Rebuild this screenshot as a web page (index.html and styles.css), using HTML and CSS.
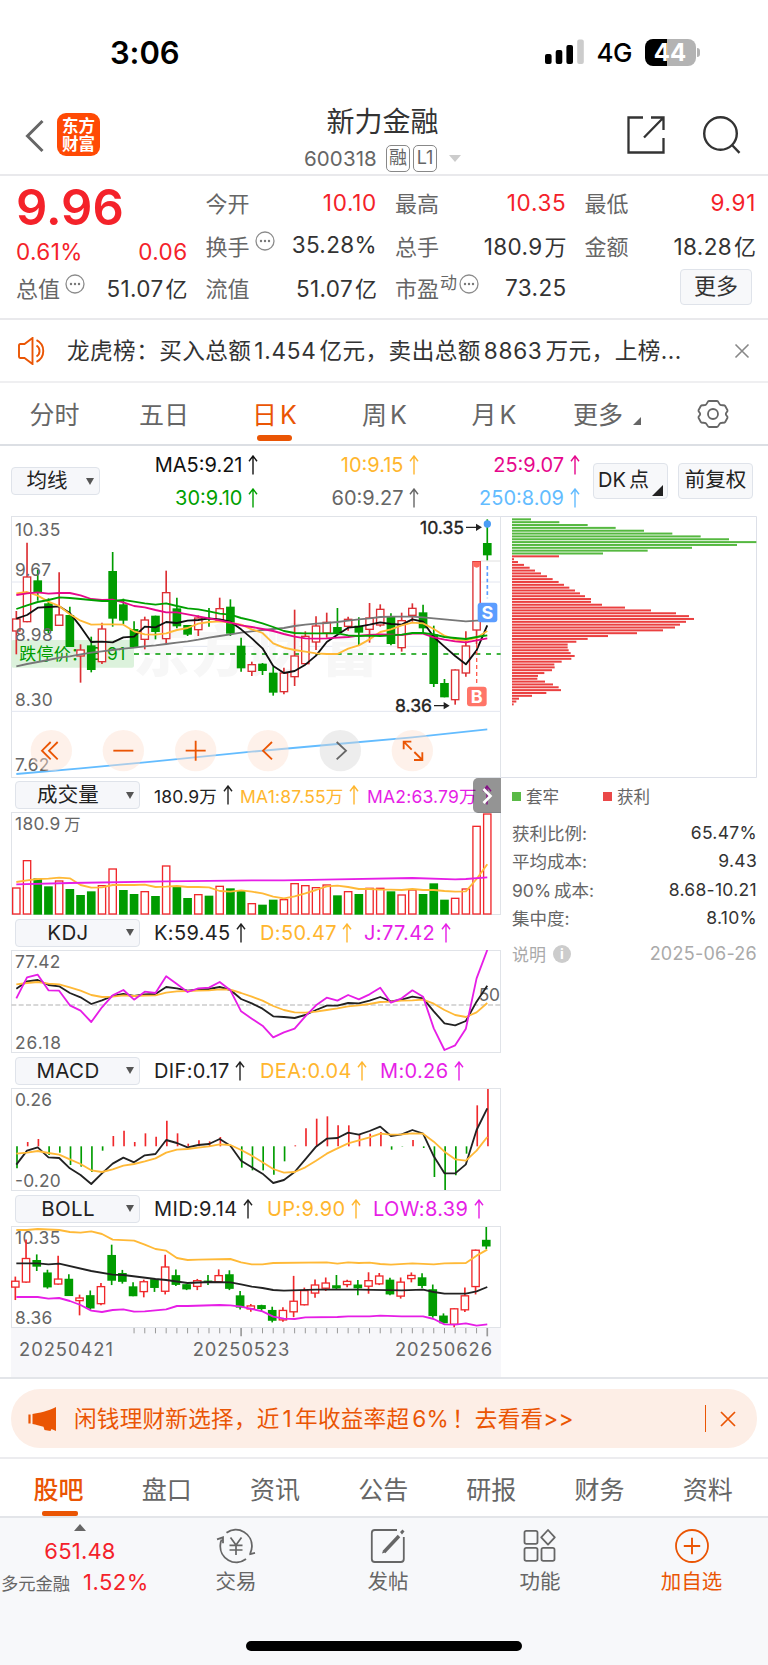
FILE: index.html
```html
<!DOCTYPE html>
<html lang="zh-CN">
<head>
<meta charset="utf-8">
<title>新力金融 600318</title>
<link rel="stylesheet" href="styles.css">
</head>
<body>
<svg class="defs" width="0" height="0">
  <symbol id="up" viewBox="0 0 10 20"><path d="M5 19.5V1M1 6.2L5 1l4 5.2" fill="none" stroke="currentColor" stroke-width="1.4"/></symbol>
  <symbol id="dots" viewBox="0 0 20 20"><circle cx="10" cy="10" r="9" fill="none" stroke="#8c8c8c" stroke-width="1.3"/><g fill="#777"><circle cx="6" cy="10" r="1.2"/><circle cx="10" cy="10" r="1.2"/><circle cx="14" cy="10" r="1.2"/></g></symbol>
</svg>

<div class="status">
  <span class="time">3:06</span>
  <svg class="signal" width="40" height="26" viewBox="0 0 40 26"><rect x="0" y="15" width="6.6" height="10" rx="2"/><rect x="10.7" y="11" width="6.6" height="14" rx="2"/><rect x="21.4" y="6" width="6.6" height="19" rx="2"/><rect x="32.2" y="0.500" width="6.6" height="24.500" rx="2" fill="#ccc"/></svg>
  <span class="net">4G</span>
  <span class="battery">44</span><i class="nub"></i>
</div>

<header class="top">
  <svg class="back" width="20" height="34" viewBox="0 0 20 34"><path d="M17.500 2L2.500 17l15 15" fill="none" stroke="#666" stroke-width="3"/></svg>
  <span class="logo">东方<br>财富</span>
  <div class="title">
    <div class="name">新力金融</div>
    <div class="code"><span class="num">600318</span><span class="tag">融</span><span class="tag">L1</span><i class="caret"></i></div>
  </div>
  <svg class="share" width="40" height="40" viewBox="0 0 40 40"><path d="M17 2.500H2.500v35h35V23M25 2.500h12.500V15M37.500 2.500L18 22.500" fill="none" stroke="#333" stroke-width="2.300"/></svg>
  <svg class="search" width="40" height="40" viewBox="0 0 40 40"><circle cx="18.500" cy="18.500" r="16.300" fill="none" stroke="#333" stroke-width="2.400"/><path d="M30 30l7.500 7.800" stroke="#333" stroke-width="2.400"/></svg>
</header>

<section class="quote">
  <div class="qcol lead">
    <div class="price">9.96</div>
    <div class="chg"><span>0.61%</span><span>0.06</span></div>
    <div class="q"><label>总值</label><svg class="dots"><use href="#dots"/></svg><b>51.07<em>亿</em></b></div>
  </div>
  <div class="qcol">
    <div class="q"><label>今开</label><b class="red">10.10</b></div>
    <div class="q"><label>换手</label><svg class="dots"><use href="#dots"/></svg><b>35.28%</b></div>
    <div class="q"><label>流值</label><b>51.07<em>亿</em></b></div>
  </div>
  <div class="qcol">
    <div class="q"><label>最高</label><b class="red">10.35</b></div>
    <div class="q"><label>总手</label><b>180.9<em>万</em></b></div>
    <div class="q"><label>市盈</label><small>动</small><svg class="dots tight"><use href="#dots"/></svg><b>73.25</b></div>
  </div>
  <div class="qcol">
    <div class="q"><label>最低</label><b class="red">9.91</b></div>
    <div class="q"><label>金额</label><b>18.28<em>亿</em></b></div>
    <div class="q"><span class="more">更多</span></div>
  </div>
</section>

<section class="notice">
  <svg width="32" height="28" viewBox="0 0 32 28"><path d="M6.500 7H2.200C1.500 7 1 7.500 1 8.200v11.600c0 .7.500 1.200 1.200 1.200h4.300L14.500 27V1L6.500 7zM18.500 8.500a6.500 6.500 0 0 1 0 11M18.500 3.200a12 12 0 0 1 0 21.600" fill="none" stroke="#ea5504" stroke-width="1.900"/></svg>
  <p>龙虎榜：买入总额<i>1.454</i>亿元，卖出总额<i>8863</i>万元，上榜...</p>
  <svg width="16" height="16" viewBox="0 0 16 16"><path d="M1.500 1.500l13 13M14.500 1.500l-13 13" stroke="#888" stroke-width="1.600"/></svg>
</section>

<nav class="periods">
  <span>分时</span><span>五日</span><span class="on">日<i>K</i></span><span>周<i>K</i></span><span>月<i>K</i></span><span class="m">更多<svg width="8" height="8"><path d="M8 0v8H0z" fill="#666"/></svg></span>
  <svg class="gear" width="32" height="30" viewBox="0 0 32 30"><path d="M12 2h8c1.600 0 1.800 3 3.400 3.900 1.600.900 4-.300 4.800 1.100l2.300 4.200c.700 1.400-1.700 2.200-1.700 3.800s2.400 2.400 1.700 3.800l-2.300 4.200c-.8 1.400-3.200.2-4.800 1.100C21.800 25 21.600 28 20 28h-8c-1.600 0-1.800-3-3.400-3.900-1.600-.9-4 .3-4.800-1.100l-2.300-4.200C.8 17.400 3.200 16.600 3.200 15S.8 12.600 1.500 11.200L3.800 7c.8-1.400 3.200-.2 4.800-1.100C10.200 5 10.400 2 12 2z" fill="none" stroke="#666" stroke-width="1.800"/><circle cx="16" cy="15" r="5" fill="none" stroke="#666" stroke-width="1.800"/></svg>
</nav>

<section class="mabar">
  <span class="drop small"><span>均线</span><i></i></span>
  <div class="mas">
    <span>MA5:9.21<svg class="up"><use href="#up"/></svg></span>
    <span class="o">10:9.15<svg class="up"><use href="#up"/></svg></span>
    <span class="p">25:9.07<svg class="up"><use href="#up"/></svg></span>
    <span class="g">30:9.10<svg class="up"><use href="#up"/></svg></span>
    <span class="gy">60:9.27<svg class="up"><use href="#up"/></svg></span>
    <span class="bl">250:8.09<svg class="up"><use href="#up"/></svg></span>
  </div>
  <span class="btn dk">DK<em>点</em><svg width="11" height="11"><path d="M11 0v11H0z" fill="#222"/></svg></span>
  <span class="btn">前复权</span>
</section>

<main class="charts">
  <div class="left">
    <svg id="main" width="490" height="262" viewBox="33 18 1470 786"></svg>
    <div class="ind vol">
      <span class="drop"><span>成交量</span><i></i></span>
      <span class="k">180.9万<svg class="up"><use href="#up"/></svg></span>
      <span class="o">MA1:87.55万<svg class="up"><use href="#up"/></svg></span>
      <span class="j">MA2:63.79万<svg class="up"><use href="#up"/></svg></span>
      <div class="fold"><svg width="12" height="18" viewBox="0 0 12 18"><path d="M2.500 2l7 7-7 7" fill="none" stroke="#fff" stroke-width="2.600"/></svg></div>
    </div>
    <svg id="vol" width="490" height="103" viewBox="33 96 1470 309"></svg>
    <div class="ind kdj">
      <span class="drop"><span>KDJ</span><i></i></span>
      <span class="k">K:59.45<svg class="up"><use href="#up"/></svg></span>
      <span class="o">D:50.47<svg class="up"><use href="#up"/></svg></span>
      <span class="j">J:77.42<svg class="up"><use href="#up"/></svg></span>
    </div>
    <svg id="kdj" width="490" height="103" viewBox="33 510 1470 309"></svg>
    <div class="ind macd">
      <span class="drop"><span>MACD</span><i></i></span>
      <span class="k">DIF:0.17<svg class="up"><use href="#up"/></svg></span>
      <span class="o">DEA:0.04<svg class="up"><use href="#up"/></svg></span>
      <span class="j">M:0.26<svg class="up"><use href="#up"/></svg></span>
    </div>
    <svg id="macd" width="490" height="103" viewBox="33 114 1470 309"></svg>
    <div class="ind boll">
      <span class="drop"><span>BOLL</span><i></i></span>
      <span class="k">MID:9.14<svg class="up"><use href="#up"/></svg></span>
      <span class="o">UP:9.90<svg class="up"><use href="#up"/></svg></span>
      <span class="j">LOW:8.39<svg class="up"><use href="#up"/></svg></span>
    </div>
    <svg id="boll" width="490" height="102" viewBox="33 528 1470 306"></svg>
    <svg id="axis" width="490" height="49" viewBox="33 834 1470 147"></svg>
  </div>
  <aside class="right">
    <svg id="chips" width="256" height="262" viewBox="3 18 768 786"></svg>
    <div class="legend"><span><i class="lg"></i>套牢</span><span><i class="lr"></i>获利</span></div>
    <dl>
      <div><dt>获利比例:</dt><dd>65.47%</dd></div>
      <div><dt>平均成本:</dt><dd>9.43</dd></div>
      <div><dt>90%<em>成本</em>:</dt><dd>8.68-10.21</dd></div>
      <div><dt>集中度:</dt><dd>8.10%</dd></div>
    </dl>
    <div class="note"><span>说明</span><b>i</b><time>2025-06-26</time></div>
  </aside>
</main>

<section class="adwrap">
  <div class="ad">
    <svg width="30" height="26" viewBox="0 0 30 26"><path d="M1.500 8.500v9" stroke="#ea5504" stroke-width="2.200"/><path d="M4.500 8C11 7 20 5 28 1v24c-1.500-.8-3-1.500-4.500-2l-1 2-6-1-1-3.200C11.500 19.500 8 18.800 4.500 18z" fill="#ea5504"/></svg>
    <p>闲钱理财新选择，近<i>1</i>年收益率超<i>6%</i>！去看看&gt;&gt;</p>
    <span class="bar"></span>
    <svg width="16" height="16" viewBox="0 0 16 16"><path d="M1 1l14 14M15 1L1 15" stroke="#ea5504" stroke-width="1.700"/></svg>
  </div>
</section>

<nav class="sections">
  <span class="on">股吧</span><span>盘口</span><span>资讯</span><span>公告</span><span>研报</span><span>财务</span><span>资料</span>
</nav>

<footer class="bottom">
  <div class="actions">
    <div class="sector">
      <i class="tri"></i>
      <div class="idx">651.48</div>
      <div class="sec"><span>多元金融</span><b>1.52%</b></div>
    </div>
    <div class="act">
      <svg width="40" height="36" viewBox="0 0 40 36"><g fill="none" stroke="#666" stroke-width="1.800"><path d="M10.500 4.800A16 16 0 0 1 35.800 19.500c-.2 1.900-.6 3.600-1.300 5M33.300 26.300L39 24.800M34.200 25.500l1.500-4.500M30 31A16 16 0 0 1 4.400 16.500c.1-1.900.6-3.600 1.200-5M1 11.300l6-2v6"/><path d="M14.500 9.500l5.500 7.500 5.500-7.500M20 17v10M13.500 17.300h13M13.500 22h13" stroke-width="1.700"/></g></svg>
      <span>交易</span>
    </div>
    <div class="act">
      <svg width="36" height="36" viewBox="0 0 36 36"><path d="M27 2H4.800A3 3 0 0 0 1.800 5v26a3 3 0 0 0 3 3h26a3 3 0 0 0 3-3V9" fill="none" stroke="#666" stroke-width="1.800"/><path d="M14 24L29 8" stroke="#666" stroke-width="3.400"/><path d="M12 25.500l1-3 2 2zM30 4l2.500-2.500 2 2L32 6.500z" fill="#666"/></svg>
      <span>发帖</span>
    </div>
    <div class="act">
      <svg width="34" height="36" viewBox="0 0 34 36"><g fill="none" stroke="#666" stroke-width="1.800"><rect x="1.500" y="2.800" width="13" height="13" rx="1.800"/><rect x="1.500" y="19.800" width="13" height="13" rx="1.800"/><rect x="18.500" y="19.800" width="13" height="13" rx="1.800"/><path d="M25 2l6.800 7.300-6.800 7.300-6.800-7.300z" stroke-linejoin="round"/></g></svg>
      <span>功能</span>
    </div>
    <div class="act hot">
      <svg width="36" height="36" viewBox="0 0 36 36"><circle cx="18" cy="18" r="16" fill="none" stroke="#ea5504" stroke-width="1.800"/><path d="M18 9.800v16.400M9.800 18h16.400" stroke="#ea5504" stroke-width="1.900"/></svg>
      <span>加自选</span>
    </div>
  </div>
  <div class="home"></div>
</footer>
<script src="charts.js"></script>
</body>
</html>
```

FILE: styles.css
```css
* { box-sizing: border-box; }
body { margin: 0; width: 768px; height: 1665px; overflow: hidden; background: #fff; color: #333; font-family: Inter, "Noto Sans CJK SC", sans-serif; display: flex; flex-direction: column; }
i, em { font-style: normal; }
p, dl, dd { margin: 0; }
svg { display: block; flex: none; }
.defs { position: absolute; }
.up { width: 10px; height: 20px; margin-left: 5.500px; }
.dots { width: 20px; height: 20px; margin: -7px 0 0 5px; }
.dots.tight { margin-left: 2px; }

.status { height: 90px; flex: none; display: flex; align-items: center; padding: 14px 68px 0 110px; color: #000; }
.time { font-size: 31px; font-weight: 600; letter-spacing: -0.1px; flex: 1; }
.signal { margin-right: 12px; }
.net { font-size: 26px; font-weight: 500; width: 48px; letter-spacing: -0.5px; }
.battery { width: 51px; height: 27px; border-radius: 8px; background: linear-gradient(90deg, #000 44%, #b3b3b3 44%); color: #fff; font-weight: 700; font-size: 24px; line-height: 27px; text-align: center; }
.nub { width: 3px; height: 9px; margin-left: 1.500px; background: #b3b3b3; border-radius: 0 3px 3px 0; }

.top { height: 86px; flex: none; border-bottom: 2px solid #e9e9ec; display: grid; grid-template-columns: 32px 43px 1fr 40px 40px; padding: 0 26px 0 25px; }
.back { margin-top: 29px; }
.logo { width: 43px; height: 43px; margin-top: 23px; border-radius: 9px; background: #ff4a05; color: #fff; font-size: 16.500px; line-height: 18px; font-weight: 700; text-align: center; padding-top: 3.500px; }
.title { display: flex; flex-direction: column; align-items: center; padding-left: 3px; }
.name { font-size: 28px; line-height: 36px; margin-top: 13.500px; }
.code { display: flex; align-items: center; height: 28px; margin-top: 4.500px; color: #666; }
.num { font-size: 20.500px; letter-spacing: 0.1px; width: 82px; }
.tag { height: 27px; min-width: 24px; border: 1.500px solid #888; border-radius: 5px; font-size: 18px; line-height: 24px; text-align: center; margin-right: 3px; padding: 0 1.500px; }
.caret { border: 6px solid transparent; border-top: 7px solid #ccc; border-bottom: 0; margin-left: 9px; }
.share { margin: 25px 0 0 -36px; }
.search { margin: 25px 0 0 0; }

.quote { height: 144px; flex: none; border-bottom: 2px solid #e9e9ec; display: grid; grid-template-columns: repeat(4, 1fr); gap: 18px; padding: 5px 12px 0 16px; }
.q { height: 42.500px; display: flex; align-items: center; font-size: 22px; }
.q label { color: #666; }
.q b { margin-left: auto; font-weight: 400; font-size: 22.500px; letter-spacing: 0.350px; }
.q em { margin-left: 2px; font-size: 22px; letter-spacing: 0; }
.q small { font-size: 17px; color: #666; margin: -12px 0 0 1px; }
.q .red { color: #f4222a; letter-spacing: 0.700px; }
.price { height: 49px; line-height: 49px; margin-top: 2px; font-size: 49px; font-weight: 600; color: #f4222a; letter-spacing: 0; }
.chg { height: 34px; padding-top: 5px; display: flex; justify-content: space-between; font-size: 22.500px; letter-spacing: 0.400px; line-height: 29px; color: #f4222a; }
.more { width: 72px; height: 36px; margin: 0 4px 0 auto; border: 1.500px solid #dfe3ea; border-radius: 4px; background: #f7f8fa; text-align: center; line-height: 32px; }

.notice { height: 63px; flex: none; border-bottom: 2px solid #efeff1; display: flex; align-items: center; padding: 0 18px; }
.notice p { flex: 1; margin: -2px 0 0 17px; font-size: 22.600px; white-space: nowrap; letter-spacing: 0.450px; }
.notice p i { margin: 0 3px; letter-spacing: 0.700px; }

.periods { height: 63px; flex: none; border-bottom: 2px solid #dcdfe4; display: grid; grid-template-columns: 109px 110px 111px 109px 110px 123px 1fr; align-items: center; font-size: 25px; color: #666; }
.periods span { position: relative; text-align: center; top: -1px; }
.periods span i { margin-left: 3px; }
.periods .on { color: #ea5504; }
.periods .on::after { content: ""; position: absolute; left: 38px; bottom: -10px; width: 35px; height: 6px; border-radius: 3px; background: #ea5504; }
.periods .m { display: flex; align-items: center; padding-left: 24px; }
.periods .m svg { margin: 17px 0 0 10px; }
.gear { margin-left: 25px; }

.drop { border: 1.500px solid #dfe3ea; border-radius: 4px; background: #f6f7fa; height: 28px; width: 125px; display: flex; align-items: center; font-size: 20.500px; color: #222; }
.drop span { flex: 1; text-align: center; line-height: 26px; padding-right: 6px; }
.drop i { border: 4.500px solid transparent; border-top: 7px solid #555; border-bottom: 0; margin-right: 5px; }
.drop.small { width: 89px; }
.drop.small i { margin-right: 5px; }
.drop.small span { padding-right: 4px; }
.mabar { height: 70px; flex: none; display: grid; grid-template-columns: 89px 493px 75px 75px; column-gap: 0; align-items: center; padding-left: 11px; }
.mas { display: grid; grid-template-columns: 158px 161px 160.500px; row-gap: 9px; font-size: 20px; color: #111; padding-top: 1px; }
.mas span { display: flex; justify-content: flex-end; align-items: center; height: 24px; letter-spacing: 0; }
.btn { border: 1.500px solid #dfe3ea; border-radius: 4px; background: #f7f8fa; height: 36px; width: 75px; line-height: 32px; text-align: center; font-size: 20.500px; color: #222; white-space: nowrap; margin-left: 10px; position: relative; }
.dk { margin-left: 0; text-align: left; padding-left: 4px; font-size: 20px; }
.dk em { margin-left: 3px; }
.dk svg { position: absolute; right: 4px; bottom: 2px; }
.o { color: #ffb62e; } .mas .p { color: #e6078c; } .mas .g { color: #00a000; } .mas .gy { color: #666; } .mas .bl { color: #63bcff; }

.charts { display: flex; padding-left: 11px; height: 861px; flex: none; }
.left { width: 490px; flex: none; }
.right { width: 256px; flex: none; }
.ind { height: 35px; display: grid; align-items: center; padding-left: 4px; font-size: 20px; position: relative; white-space: nowrap; letter-spacing: 0.350px; }
.ind > span:not(.drop) { display: flex; align-items: center; }
.ind .k { color: #222; } .ind .j { color: #e61ee6; }
.vol { height: 34px; grid-template-columns: 139px 86px 127px 1fr; font-size: 17.500px; letter-spacing: 0.200px; }
.kdj { grid-template-columns: 139px 106px 104px 1fr; }
.macd { grid-template-columns: 139px 106px 120px 1fr; }
.boll { grid-template-columns: 139px 113px 106px 1fr; }
.fold { position: absolute; right: 0; top: 0; width: 28px; height: 35px; background: rgba(0,0,0,.42); border-radius: 5px 0 0 5px; display: flex; align-items: center; justify-content: center; }
.legend { display: flex; height: 36px; padding-left: 11px; font-size: 16.500px; color: #666; align-items: center; }
.legend span { width: 91px; display: flex; align-items: center; gap: 5px; }
.legend i { width: 9px; height: 9px; }
.lg { background: #5aba47; } .lr { background: #ea4848; }
.right dl { padding: 4px 0 0 11px; font-size: 17.500px; }
.right dl div { display: flex; justify-content: space-between; height: 28.500px; align-items: center; }
dt { color: #666; } dt em { margin-left: 3px; } dd { color: #333; letter-spacing: 0.300px; }
.note { display: flex; align-items: center; height: 43px; padding-left: 11px; font-size: 17px; color: #aaa; }
.note b { width: 18px; height: 18px; border-radius: 50%; background: #ccc; color: #fff; font-size: 14px; line-height: 18px; text-align: center; margin-left: 7px; }
.note time { margin-left: auto; font-size: 18px; letter-spacing: 0.250px; }

.adwrap { height: 82px; flex: none; border-top: 2px solid #e3e5e9; border-bottom: 2px solid #ececef; padding: 10px 11px 0; }
.ad { height: 59px; border-radius: 29px; background: #fdeee6; display: flex; align-items: center; padding: 0 21px 0 17px; color: #ea5504; }
.ad p { flex: 1; margin: -2px 0 0 16px; font-size: 22.600px; white-space: nowrap; letter-spacing: 0.250px; }
.ad p i { margin: 0 3px; }
.bar { width: 1.500px; height: 27px; background: #ea5504; margin-right: 14px; }
.sections { height: 59px; flex: none; border-bottom: 2px solid #e3e5e9; display: grid; grid-template-columns: repeat(7, 108.200px); padding-left: 4.500px; font-size: 25px; line-height: 63px; text-align: center; color: #666; }
.sections span { position: relative; height: 57px; }
.sections .on { color: #ea5504; font-weight: 500; }
.sections .on::after { content: ""; position: absolute; left: 37px; bottom: 0; width: 36px; height: 5px; border-radius: 2px; background: #ea5504; }

.bottom { flex: 1; background: #f7f8fa; display: flex; flex-direction: column; align-items: center; justify-content: space-between; padding-bottom: 14px; }
.actions { display: grid; grid-template-columns: 160px 152px 152px 152px 151px; width: 768px; }
.sector { display: flex; flex-direction: column; align-items: center; color: #f4222a; }
.tri { border: 6px solid transparent; border-bottom: 7px solid #666; border-top: 0; margin-top: 6px; }
.idx { font-size: 22px; line-height: 30px; margin-top: 5px; letter-spacing: 0.200px; }
.sec { display: flex; align-items: center; width: 160px; padding-left: 1px; height: 36px; margin-top: -2px; }
.sec span { font-size: 17.300px; color: #666; width: 82px; }
.sec b { font-size: 22px; font-weight: 400; letter-spacing: 0.500px; }
.act { display: flex; flex-direction: column; align-items: center; font-size: 20.500px; color: #666; padding-top: 10px; line-height: 30px; }
.act span { margin-top: 3px; }
.hot { color: #ea5504; }
.home { width: 276px; height: 10px; border-radius: 5px; background: #000; }
```

FILE: charts.js
```js
const RED = '#dc2f33', GREEN = '#009c00', AMBER = '#ffb937', PURPLE = '#e61ee6', INK = '#222';
const X0 = 49, STEP = 32.11, BAR = 26;
const x = i => X0 + STEP * i;
const put = (id, parts) => { document.getElementById(id).innerHTML = parts.join(''); };

// [direction, high, open/close top, open/close bottom, low]
const candles = [
  ['r',303,325,365,433],['r',98,199,337,337],['g',180,211,248,272],['g',265,280,363,370],['r',187,313,348,348],
  ['g',290,315,411,411],['r',403,418,440,518],['g',380,406,480,487],['r',338,355,457,462],['g',126,183,326,350],
  ['g',266,283,332,342],['g',334,357,412,412],['r',320,328,390,418],['g',317,317,366,388],['r',182,246,388,402],
  ['g',263,295,349,355],['g',345,345,374,378],['r',316,322,361,378],['g',294,325,329,350],['r',263,294,335,335],
  ['g',268,290,371,378],['g',383,407,475,485],['r',455,462,486,498],['g',459,461,483,495],['g',470,488,548,557],
  ['r',473,487,547,553],['r',299,436,502,528],['r',364,377,463,463],['r',319,346,398,420],['r',308,335,371,383],
  ['g',294,351,369,372],['r',320,326,351,362],['g',322,347,368,406],['r',279,322,360,398],['r',283,296,347,350],
  ['g',310,320,402,406],['r',308,330,415,425],['r',280,293,318,335],['g',284,307,355,368],['g',347,373,522,531],
  ['g',507,519,562,562],['r',478,478,571,584],['r',364,406,491,500],['r',153,153,362,402],['g',28,99,136,151]
];

function box(dir, cx, top, bottom, red) {
  return dir === 'g'
    ? `<rect x="${cx - BAR / 2}" y="${top}" width="${BAR}" height="${Math.max(4, bottom - top)}" fill="${GREEN}"/>`
    : `<rect x="${cx - 11}" y="${top + 2}" width="22" height="${Math.max(2, bottom - top - 4)}" fill="#fff" stroke="${red}" stroke-width="4"/>`;
}
function candleSet(map, dx, red) {
  return candles.map(([d, h, t, b, l], i) => {
    const c = x(i) + dx, s = d === 'g' ? GREEN : red;
    return `<path d="M${c} ${map(h)}V${map(l)}" stroke="${s}" stroke-width="5"/>` + box(d, c, map(t), map(b), red);
  }).join('');
}
// Accepts a dense list of values or a sparse list of [index, value] pairs
function line(vals, color, w = 5.5) {
  const pts = vals.map((v, i) => Array.isArray(v) ? `${x(v[0])},${v[1]}` : `${x(i)},${v}`).join(' ');
  return `<polyline points="${pts}" fill="none" stroke="${color}" stroke-width="${w}" stroke-linejoin="round"/>`;
}
const frame = (y, h, w = 1468) => `<rect x="34.500" y="${y + 1.500}" width="${w - 1}" height="${h - 3}" fill="none" stroke="#e0e3e8" stroke-width="3"/>`;
const text = (s, tx, ty, len, size = 52, fill = '#666', extra = '') =>
  `<text x="${tx}" y="${ty}" font-size="${size}" fill="${fill}" textLength="${len}" ${extra}>${s}</text>`;
const grid = y => `<path d="M34 ${y}H1502" stroke="#e3e6f0" stroke-width="3"/>`;

const tool = (cx, glyph, on = true) =>
  `<circle cx="${cx}" cy="722" r="62" fill="${on ? '#fddfd0' : '#d6d6d6'}" fill-opacity=".45"/><path d="${glyph}" fill="none" stroke="${on ? '#ea5504' : '#666'}" stroke-width="5.500"/>`;

put('main', [
  frame(18, 786), grid(216), grid(409), grid(604),
  '<path d="M1440 153H1502" stroke="#e0e0e0" stroke-width="3"/>',
  '<g font-size="168" font-weight="900" fill="#f7f7f7"><text x="400" y="484">东</text><text x="575" y="484">方</text><text x="750" y="484">财</text><text x="965" y="484">富</text></g>',
  '<path d="M402 432H1502" stroke="#009c00" stroke-width="5" stroke-dasharray="15 17"/>',
  '<rect x="34" y="390" width="368" height="83" rx="6" fill="#dcf2dc"/>',
  text('跌停价', 58, 451, 154, 51, GREEN), text('：', 212, 451, 50, 51, GREEN), text('8.91', 273, 450, 103, 52, GREEN),
  candleSet(v => v, 0, RED),
  line([[0,792],[6,775],[12,757],[22,725],[30,702],[37,682],[44,658]], '#63bcff'),
  line([469,462,456,450,443,439,433,428,424,420,416,413,409,406,402,398,394,389,383,378,373,368,364,360,357,354,348,344,341,339,336,332,328,325,321,320,320,320,322,325,328,331,334,332,332], '#777'),
  line([326,315,293,291,289,309,350,396,395,397,382,380,350,352,336,339,332,330,325,328,335,358,385,415,468,489,483,464,437,396,374,353,350,344,337,342,344,328,335,381,410,438,463,421,346], '#111'),
  line([250,246,257,275,288,313,332,344,343,343,344,364,373,374,370,360,354,341,336,334,338,344,358,369,400,413,420,425,430,432,432,416,406,388,366,358,346,338,340,357,377,389,392,383,363], AMBER),
  line([255,250,247,251,249,249,256,267,270,269,277,288,292,300,307,307,313,319,325,331,338,346,351,357,363,372,380,385,386,385,383,381,377,375,373,374,375,371,371,382,389,394,397,391,385], '#e6078c'),
  line([297,286,276,270,262,264,267,270,273,273,270,275,280,284,280,288,295,298,304,311,314,324,331,340,351,363,369,370,370,370,370,376,378,377,378,376,374,369,369,373,381,384,387,381,376], '#00a000'),
  text('10.35', 45, 78, 136), text('9.67', 45, 197, 108), text('8.98', 45, 393, 113), text('8.30', 45, 588, 113), text('7.62', 45, 783, 103),
  text('10.35', 1260, 71, 132, 53, '#222', 'stroke="#222" stroke-width="1"'), text('8.36', 1185, 605, 111, 53, '#222', 'stroke="#222" stroke-width="1"'),
  '<g fill="none" stroke="#222" stroke-width="4"><path d="M1398 52h38M1302 587h40"/></g><path d="M1446 52l-18-11v22zM1349 587l-18-11v22z" fill="#222"/>',
  '<circle cx="1462" cy="42" r="11" fill="#4a9cf5"/><path d="M1462 168V265" stroke="#5a9cff" stroke-width="5" stroke-dasharray="11 8"/>',
  '<path d="M1420 155h20v8a10 10 0 0 1-20 0z" fill="#ff6a5e"/><path d="M1430 402V520" stroke="#ff5b4d" stroke-width="4" stroke-dasharray="12 9"/>',
  '<rect x="1433" y="278" width="59" height="59" rx="9" fill="#5c9dff"/><rect x="1401" y="530" width="59" height="59" rx="9" fill="#ff7568"/>',
  '<g font-size="54" font-weight="700" fill="#fff" text-anchor="middle"><text x="1462" y="327">S</text><text x="1430" y="579">B</text></g>',
  tool(154, 'M152 696l-26 26 26 26M173 696l-26 26 26 26'), tool(370, 'M340 722h60'), tool(587, 'M557 722h60M587 692v60'),
  tool(804, 'M816 696l-27 26 27 26'), tool(1021, 'M1010 696l28 26-28 26', false),
  tool(1237, 'M1211 718v-23h23M1211 695l24 24M1267 727v23h-25M1267 750l-24-24')
]);

const vols = ['r322','r240','g295','g319','r301','g327','g345','g334','r315','r265','g330','g342','r333','g348','r256','g320','g354','r342','g347','r317','g325','g330','r369','g374','g359','r357','r309','r315','r321','r313','g346','r333','g342','r323','r323','g334','r343','r328','g342','g310','g359','r353','r325','r137','r100'];
put('vol', [
  frame(96, 309),
  vols.map((v, i) => box(v[0], x(i), +v.slice(1), 404, '#f0282b')).join(''),
  line([306,301,297,296,293,295,315,323,322,315,315,315,314,321,320,318,321,321,322,333,335,331,335,340,350,355,349,340,330,319,317,321,327,327,329,329,330,327,330,330,333,335,334,297,253], AMBER),
  line([[0,313],[5,309],[14,304],[22,301],[25,301],[30,298],[37,294],[41,298],[42,297],[44,292]], PURPLE),
  text('180.9', 45, 149, 136, 52), text('万', 193, 150, 49, 49)
]);

put('kdj', [
  frame(510, 309), '<path d="M34 675H1502" stroke="#ccc" stroke-width="4" stroke-dasharray="15 7"/>',
  text('50', 1436, 662, 64), text('77.42', 45, 563, 136), text('26.18', 45, 806, 138),
  line([626,604,600,615,619,639,652,672,661,648,642,648,643,642,621,625,632,629,627,621,630,657,670,686,709,711,714,705,690,677,677,669,670,662,651,664,659,650,655,694,730,736,723,665,617], INK),
  line([613,609,606,611,613,622,632,645,651,650,646,648,647,646,638,634,633,632,631,628,629,639,650,662,678,690,697,698,695,690,685,679,676,672,666,665,662,661,659,671,690,705,711,697,669], AMBER),
  line([655,592,584,631,632,676,692,726,682,646,630,659,635,639,589,612,636,625,623,606,631,694,716,737,772,757,746,709,676,653,662,645,658,643,623,668,655,631,650,745,810,796,746,595,510], PURPLE)
]);

const hist = [355,276,267,315,308,345,350,366,302,258,242,276,250,260,212,250,281,271,274,261,288,353,361,361,374,334,286,235,206,199,226,226,255,251,246,299,290,270,294,381,420,376,311,166,117];
put('macd', [
  frame(114, 309), text('0.26', 45, 167, 111), text('-0.20', 45, 410, 137),
  hist.map((v, i) => `<path d="M${x(i) + 2} 289V${v}" stroke="${v < 290 ? '#f0282b' : GREEN}" stroke-width="5"/>`).join(''),
  line([344,302,292,322,324,355,375,402,370,341,323,337,316,312,270,279,292,285,282,267,287,332,352,371,399,390,366,328,290,266,264,248,254,243,230,258,253,240,251,319,370,370,343,240,175], INK),
  line([311,308,303,309,314,328,342,361,366,358,347,342,334,325,308,299,297,293,289,283,285,300,317,337,357,368,366,352,332,311,295,280,271,262,251,254,253,250,251,275,305,328,332,302,261], AMBER)
]);

put('boll', [
  frame(528, 306), text('10.35', 45, 581, 136), text('8.36', 45, 823, 112),
  candleSet(v => 531 + (v - 28) * 0.541, -3, '#f0282b'),
  line([[0,640],[2,640],[3,643],[4,641],[7,663],[9,674],[10,675],[13,687],[14,690],[16,699],[18,696],[20,697],[21,703],[22,710],[23,714],[24,720],[25,722],[28,719],[32,719],[36,721],[38,719],[39,726],[40,731],[42,731],[43,724],[44,711]], INK),
  line([[0,540],[1,540],[2,537],[4,540],[5,546],[6,548],[7,544],[8,552],[9,569],[11,572],[12,584],[13,597],[14,602],[15,624],[16,630],[17,629],[20,627],[21,637],[22,643],[23,643],[24,639],[29,637],[30,641],[31,637],[32,639],[33,638],[34,642],[35,644],[37,640],[39,643],[40,640],[42,639],[43,617],[44,599]], AMBER),
  line([[0,741],[2,741],[3,746],[4,744],[5,753],[6,765],[7,782],[8,786],[9,780],[10,778],[11,785],[12,784],[14,778],[15,768],[16,768],[19,765],[20,766],[21,770],[22,777],[23,784],[24,800],[25,806],[26,807],[27,802],[30,801],[31,799],[33,799],[34,797],[36,799],[38,799],[39,807],[40,823],[41,824],[42,820],[43,827],[44,823]], PURPLE)
]);

const ticks = [];
for (let i = 11; i < 45; i++) {
  const big = i === 21 || i === 44;
  ticks.push(`<path d="M${x(i)} 834v${big ? 25 : 16}" stroke="#999" stroke-width="${big ? 5 : 3}"/>`);
}
put('axis', ['<rect x="33" y="834" width="1470" height="147" fill="#f7f7fa"/>', ...ticks,
  text('20250421', 57, 918, 282, 55), text('20250523', 578, 918, 290, 55), text('20250626', 1185, 918, 291, 55)]);

// Right edge of each price bucket; the first 13 buckets are above the current price
const chips = [93,178,263,347,432,517,602,687,769,711,576,443,309,177,42,54,72,89,105,123,141,158,176,192,208,225,240,255,273,273,306,375,453,528,567,582,558,540,525,489,411,324,263,229,203,203,206,212,224,214,185,163,164,156,133,114,112,135,159,176,183,139,96,57,49,41];
put('chips', ['<path d="M3 19.500H769.500V802.500H3" fill="none" stroke="#dde0e8" stroke-width="3"/>',
  ...chips.map((e, i) => `<rect x="36" y="${(25 + i * 8.54).toFixed(2)}" width="${e - 36}" height="6" fill="${i < 13 ? '#55b840' : '#ea4040'}"/>`)]);
```
